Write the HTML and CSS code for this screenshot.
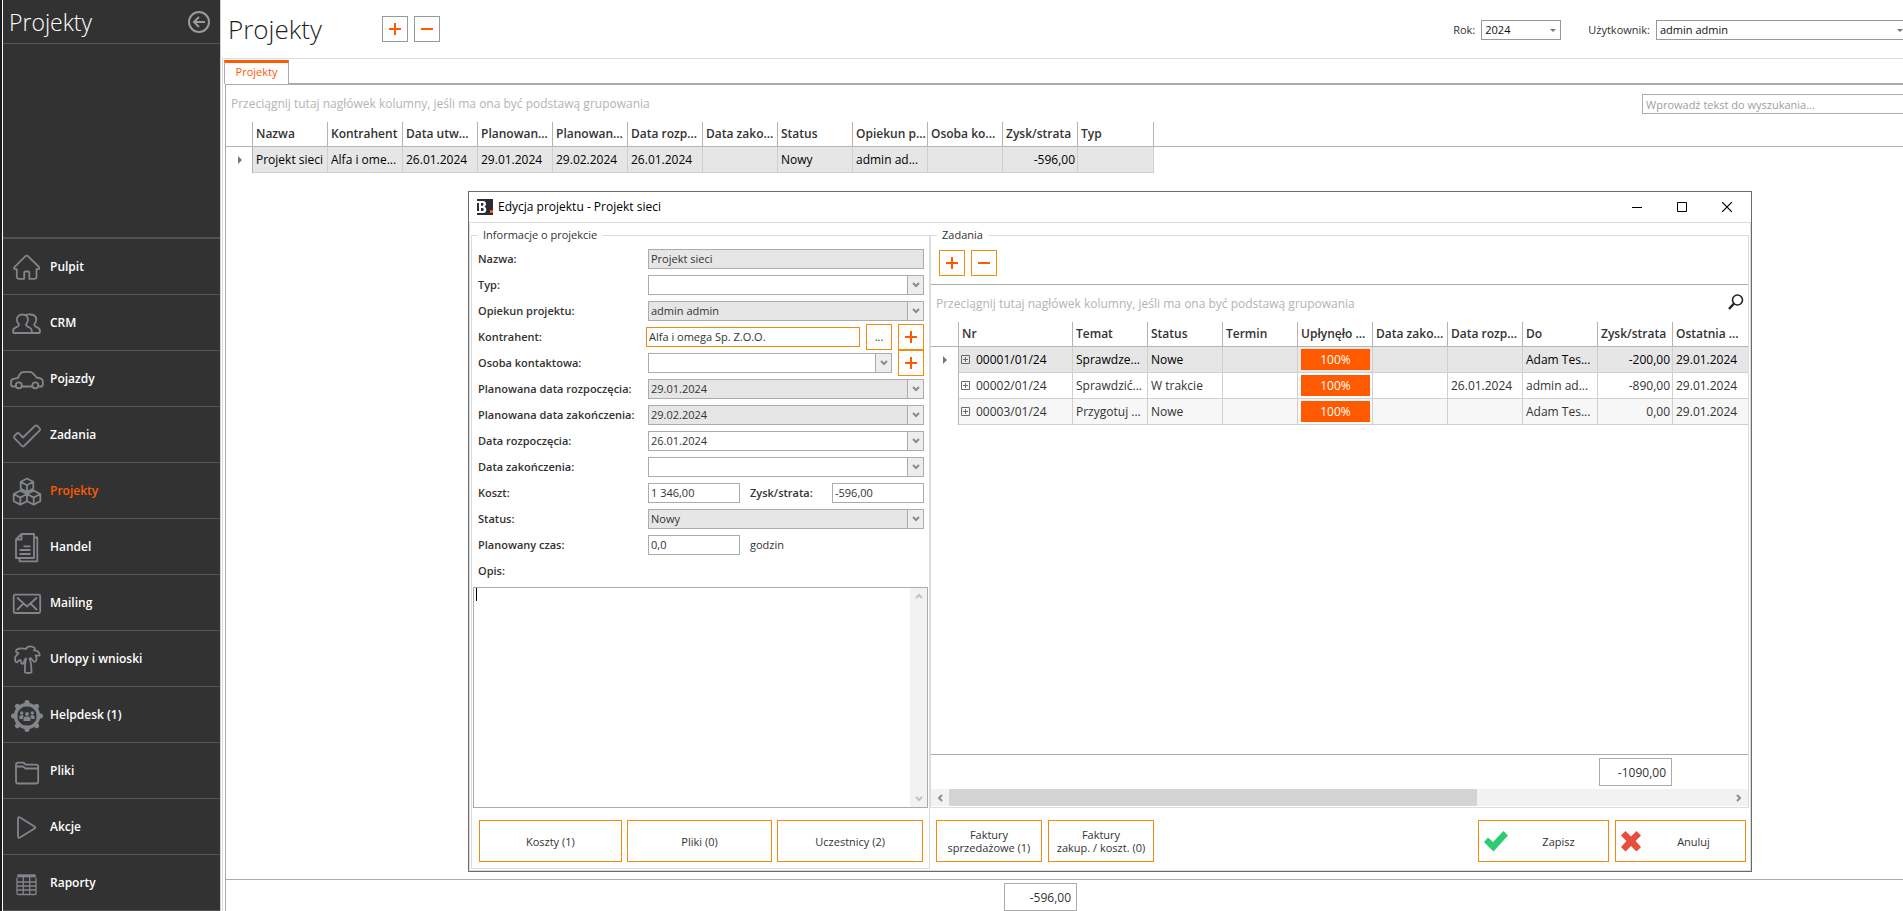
FILE: index.html
```html
<!DOCTYPE html>
<html lang="pl">
<head>
<meta charset="utf-8">
<meta name="viewport" content="width=device-width, initial-scale=1">
<title>Projekty</title>
<link rel="stylesheet" href="styles.css">
</head>
<body>
<svg class="sprite" aria-hidden="true">
  <symbol id="i-plus" viewBox="0 0 12 12"><path d="M0 6H12M6 0V12" stroke="#ff5a00" stroke-width="2"/></symbol>
  <symbol id="i-minus" viewBox="0 0 12 12"><path d="M0 6H12" stroke="#ff5a00" stroke-width="2"/></symbol>
  <symbol id="i-chev" viewBox="0 0 8 6"><path d="M1 1L4 4L7 1" fill="none" stroke="#8c8c8c" stroke-width="2"/></symbol>
  <symbol id="i-expand" viewBox="0 0 9 9"><path d="M.5 .5H8.500V8.500H.5ZM2 4.500H7M4.500 2V7" fill="none" stroke="#6a6a6a"/></symbol>
</svg>
<div class="app">
  <aside class="sidebar">
    <header class="side-head">
      <span class="side-title">Projekty</span>
      <button class="back" aria-label="Wstecz"><svg width="22" height="22" viewBox="0 0 22 22" fill="none" stroke="#9a9a9a" stroke-width="2"><circle cx="11" cy="11" r="10"/><path d="M17 11H6.500M11 6L6 11L11 16"/></svg></button>
    </header>
    <nav class="nav">
      <a href="#"><svg viewBox="0 0 36 36"><path d="M16.500 7.200Q17.700 6 18.900 7.200L30 18Q30.800 20 29.500 20.200H27.500V27.500Q27.500 29.800 25.500 29.800H20.300V23.500Q20.300 22.500 19.300 22.500H16.200Q15.200 22.500 15.200 23.500V29.800H9.800Q7.800 29.800 7.800 27.500V20.200H5.800Q4.500 19.800 5.200 18.300Z"/></svg>Pulpit</a>
      <a href="#"><svg viewBox="0 0 36 36"><path d="M13.300 9.500C9.800 9.500 7.800 12 7.800 14.800C7.800 17.200 9.300 18.500 10 19.500C10.300 21.500 7.500 21.800 5.800 23C4.200 24.200 3.800 26.500 4.600 28H22.500C23.300 25.500 22.300 23.500 20.500 22.500C18.500 21.400 16.500 21.200 17 19.300C17.800 18.300 19 17 19 14.800C19 12 17 9.500 13.300 9.500ZM16.500 10.500C17.800 9.500 19.500 9.300 21.500 9.500C25.200 9.800 27.500 12 27.300 15C27.200 17.500 25.500 18.400 25.200 19.800C25.500 21.500 27.500 21.800 29.300 23C30.900 24.200 31.300 26.500 30.500 28H22.500"/></svg>CRM</a>
      <a href="#"><svg viewBox="0 0 36 36"><path d="M6.500 25.500H3.800Q2 25.500 2 23V21Q2 18.300 4.500 17.800L8.800 17C10 14.500 11 12.500 12.500 11.500C14 10.700 20 10.600 22 11.200C24 12 26 14.500 27.500 16.500C30.500 17 32.500 17.500 33.300 18.700C34.200 20 34.300 25.500 32.500 25.500H30M13 25.500H23"/><circle cx="9.800" cy="24.300" r="3"/><circle cx="26.300" cy="24.300" r="3"/></svg>Pojazdy</a>
      <a href="#"><svg viewBox="0 0 36 36"><path d="M5.200 20.800Q4.600 19.800 5.300 19L8 16.300Q8.900 15.600 9.800 16.300L14 20.500L26.200 8.700Q27.200 8 28.100 8.700L30.800 11.500Q31.500 12.500 30.800 13.400L15 29Q14 29.700 13 29Z"/></svg>Zadania</a>
      <a href="#" class="active"><svg viewBox="0 0 36 36"><path d="M18 5.500L24.300 8.800V15.600L18 19L11.700 15.600V8.800ZM11.700 8.800L18 12.300L24.300 8.800M18 12.300V19M11.300 17.600L18 21V28.300L11.300 31.600L4.700 28.300V21ZM4.700 21L11.300 24.600L18 21M11.300 24.600V31.600M24.700 17.600L31.300 21V28.300L24.700 31.600L18 28.300V21ZM18 21L24.700 24.600L31.300 21M24.700 24.600V31.600"/></svg>Projekty</a>
      <a href="#"><svg viewBox="0 0 36 36"><path d="M12.500 5H25V29H7V10.500ZM12.500 5V10.500H7M25.500 8.500H28.300V32.300H10.500V29.500M14.500 17.300H21.500M10.500 21H21.500M10.500 25H21.500"/></svg>Handel</a>
      <a href="#"><svg viewBox="0 0 36 36"><rect x="4.700" y="9.700" width="26.500" height="18.300" rx="1.500"/><path d="M8 12.500L18 21.500L28 12.500M8 25L14.500 18.500M28 25L21.500 18.500"/></svg>Mailing</a>
      <a href="#"><svg viewBox="0 0 36 36"><path d="M16 31.500V23.500L17 17.500C16 17.500 15.500 19 14.500 22C13.500 24 12 22.500 11.500 19C10 19 9 20 8 21.500C6 21 5.500 18.500 6.500 15.500C7.500 14 9 13 9.500 12C6.500 12 6.500 10 8 8.500C11 6.500 15 7.500 17 8C18 5.500 21 5 24 6C26 6.500 26.500 8 25 9.300C28.500 9.500 30.500 11.500 30.800 14C29 15.500 27.500 14 26.500 14.500C28.500 17 27.500 20 25.500 21C23.500 20 23 18 21.500 17L20.500 17.500C22 21 22.500 26 22.500 31.500Q19 32.500 16 31.500Z"/></svg>Urlopy i wnioski</a>
      <a href="#"><svg viewBox="0 0 36 36"><circle cx="18" cy="19" r="11.500" stroke-width="3.400"/><path stroke-width="5" stroke-linecap="round" d="M18 7V5.500M18 31V32.500M6 19H4.500M30 19H31.500M9.500 10.500L8.300 9.300M26.500 10.500L27.700 9.300M9.500 27.500L8.300 28.700M26.500 27.500L27.700 28.700"/><g fill="#82858b" stroke="none"><circle cx="12.700" cy="16" r="1.700"/><circle cx="18" cy="17" r="1.900"/><circle cx="23.300" cy="16" r="1.700"/><path d="M10.300 22V20Q10.300 18.300 12 18.300H14.500V19.500Q13.700 20.500 13.700 22ZM25.700 22V20Q25.700 18.300 24 18.300H21.500V19.500Q22.300 20.500 22.300 22ZM14.500 24V21.500Q14.500 19.500 16.500 19.500H19.500Q21.500 19.500 21.500 21.500V24Z"/></g></svg>Helpdesk (1)</a>
      <a href="#"><svg viewBox="0 0 36 36"><path d="M7 28.500V11.500Q7 9.700 9 9.700H14.500L17 11.700H27Q29.200 11.700 29.200 13.500V28.500Q29.200 30.500 27 30.500H9Q7 30.500 7 28.500ZM7 13.500H14L16.500 15.500H29"/></svg>Pliki</a>
      <a href="#"><svg viewBox="0 0 36 36"><path d="M9 9.500Q9 7.500 11 8.500L25.500 17.500Q27 18.500 25.500 19.500L11 28.500Q9 29.500 9 27.500Z"/></svg>Akcje</a>
      <a href="#"><svg viewBox="0 0 36 36"><path d="M8 12.500V28.500Q8 29.500 9 29.500H26Q27 29.500 27 28.500V12.500M8 17H27M8 21H27M8 25H27M14.300 12V29.500M20.700 12V29.500" stroke-width="1.300"/><path d="M8.300 10.800H26.700" stroke-width="3"/></svg>Raporty</a>
    </nav>
  </aside>

  <main class="main">
    <header class="top">
      <h1>Projekty</h1>
      <div class="tools">
        <button class="sq grey" aria-label="Dodaj"><svg><use href="#i-plus"/></svg></button>
        <button class="sq grey" aria-label="Usuń"><svg><use href="#i-minus"/></svg></button>
      </div>
      <div class="filters">
        <label for="rok">Rok:</label>
        <span class="drop year"><select id="rok"><option>2024</option></select><i></i></span>
        <label for="user" class="user-label">Użytkownik:</label>
        <span class="drop user"><select id="user"><option>admin admin</option></select><i></i></span>
      </div>
    </header>
    <div class="workspace">
      <div class="tabs"><button class="tab">Projekty</button></div>
      <section class="panel">
        <div class="group-row">
          <span>Przeciągnij tutaj nagłówek kolumny, jeśli ma ona być podstawą grupowania</span>
          <input type="search" class="search" aria-label="Szukaj" placeholder="Wprowadź tekst do wyszukania...">
        </div>
        <table class="grid">
          <colgroup><col class="c-ind"><col class="c"><col class="c"><col class="c"><col class="c"><col class="c"><col class="c"><col class="c"><col class="c"><col class="c"><col class="c"><col class="c"><col class="c-last"><col></colgroup>
          <thead><tr><th></th><th>Nazwa</th><th>Kontrahent</th><th>Data utw...</th><th>Planowan...</th><th>Planowan...</th><th>Data rozp...</th><th>Data zako...</th><th>Status</th><th>Opiekun p...</th><th>Osoba ko...</th><th>Zysk/strata</th><th>Typ</th><th class="rest"></th></tr></thead>
          <tbody><tr class="sel"><td class="ind"><i></i></td><td>Projekt sieci</td><td>Alfa i ome...</td><td>26.01.2024</td><td>29.01.2024</td><td>29.02.2024</td><td>26.01.2024</td><td></td><td>Nowy</td><td>admin ad...</td><td></td><td class="num">-596,00</td><td></td><td class="rest"></td></tr></tbody>
        </table>
        <div class="fill"></div>
        <footer class="sum main-sum"><output>-596,00</output></footer>
      </section>
    </div>
  </main>
</div>

<div class="dialog" role="dialog" aria-labelledby="dlg-title">
  <header class="titlebar">
    <svg class="logo" width="16" height="16" viewBox="0 0 16 16"><path fill="#2b2b35" d="M0 0H16V16H0Z"/><path fill="#fff" d="M0 2H6Q9 2 9 5Q9 7 7.500 7.700Q9.300 8.300 9.300 10.500Q9.300 14 6 14H0V12H2V4H0Z"/><path fill="#2b2b35" d="M4 4H5.500Q6.500 4 6.500 5.300Q6.500 6.700 5.500 6.700H4ZM4 9H5.500Q6.700 9 6.700 10.500Q6.700 12 5.500 12H4Z"/><path fill="#ff5a00" d="M13 11H16V14H13Z"/></svg>
    <span id="dlg-title">Edycja projektu - Projekt sieci</span>
    <div class="win">
      <button aria-label="Minimalizuj"><svg width="10" height="10"><path d="M0 5.500H10" stroke="#000"/></svg></button>
      <button aria-label="Maksymalizuj"><svg width="10" height="10"><path d="M.5 .5H9.500V9.500H.5Z" fill="none" stroke="#000"/></svg></button>
      <button aria-label="Zamknij"><svg width="10" height="10"><path d="M0 0L10 10M10 0L0 10" stroke="#000" stroke-width="1.200"/></svg></button>
    </div>
  </header>
  <div class="dlg-body">
    <fieldset class="info">
      <legend>Informacje o projekcie</legend>
      <div class="form">
        <div class="row"><label for="f1">Nazwa:</label><input id="f1" class="box ro" value="Projekt sieci" readonly></div>
        <div class="row"><label for="f2">Typ:</label><span class="box combo"><select id="f2"><option></option></select><b><svg><use href="#i-chev"/></svg></b></span></div>
        <div class="row"><label for="f3">Opiekun projektu:</label><span class="box combo ro"><select id="f3"><option>admin admin</option></select><b><svg><use href="#i-chev"/></svg></b></span></div>
        <div class="row"><label for="f4">Kontrahent:</label><input id="f4" class="box focus" value="Alfa i omega Sp. Z.O.O."><button class="sq" aria-label="Wybierz">...</button><button class="sq" aria-label="Dodaj kontrahenta"><svg><use href="#i-plus"/></svg></button></div>
        <div class="row"><label for="f5">Osoba kontaktowa:</label><span class="box combo"><select id="f5"><option></option></select><b><svg><use href="#i-chev"/></svg></b></span><button class="sq" aria-label="Dodaj osobę"><svg><use href="#i-plus"/></svg></button></div>
        <div class="row"><label for="f6">Planowana data rozpoczęcia:</label><span class="box combo ro"><input id="f6" value="29.01.2024" readonly><b><svg><use href="#i-chev"/></svg></b></span></div>
        <div class="row"><label for="f7">Planowana data zakończenia:</label><span class="box combo ro"><input id="f7" value="29.02.2024" readonly><b><svg><use href="#i-chev"/></svg></b></span></div>
        <div class="row"><label for="f8">Data rozpoczęcia:</label><span class="box combo"><input id="f8" value="26.01.2024"><b><svg><use href="#i-chev"/></svg></b></span></div>
        <div class="row"><label for="f9">Data zakończenia:</label><span class="box combo"><input id="f9"><b><svg><use href="#i-chev"/></svg></b></span></div>
        <div class="row"><label for="f10">Koszt:</label><input id="f10" class="box short" value="1 346,00"><label for="f11" class="mid">Zysk/strata:</label><input id="f11" class="box short" value="-596,00"></div>
        <div class="row"><label for="f12">Status:</label><span class="box combo ro"><select id="f12"><option>Nowy</option></select><b><svg><use href="#i-chev"/></svg></b></span></div>
        <div class="row"><label for="f13">Planowany czas:</label><input id="f13" class="box short" value="0,0"><span class="unit">godzin</span></div>
        <div class="row"><label for="f14">Opis:</label></div>
      </div>
      <div class="memo"><i class="caret"></i><textarea id="f14"></textarea><div class="vbar"><svg><use href="#i-chev"/></svg><svg><use href="#i-chev"/></svg></div></div>
      <div class="actions"><button class="act">Koszty (1)</button><button class="act">Pliki (0)</button><button class="act">Uczestnicy (2)</button></div>
    </fieldset>
    <div class="right">
      <fieldset class="tasks">
        <legend>Zadania</legend>
        <div class="task-tools">
          <button class="sq" aria-label="Dodaj zadanie"><svg><use href="#i-plus"/></svg></button>
          <button class="sq" aria-label="Usuń zadanie"><svg><use href="#i-minus"/></svg></button>
        </div>
        <div class="group-row">
          <span>Przeciągnij tutaj nagłówek kolumny, jeśli ma ona być podstawą grupowania</span>
          <button class="find" aria-label="Szukaj"><svg width="16" height="16" viewBox="0 0 16 16" fill="none" stroke="#222"><circle cx="9.500" cy="6" r="5" stroke-width="1.600"/><path d="M6 9.500L1 15" stroke-width="2.400"/></svg></button>
        </div>
        <table class="grid">
          <colgroup><col class="c-ind2"><col class="c-nr"><col><col><col><col><col><col><col><col><col></colgroup>
          <thead><tr><th></th><th>Nr</th><th>Temat</th><th>Status</th><th>Termin</th><th>Upłynęło ...</th><th>Data zako...</th><th>Data rozp...</th><th>Do</th><th>Zysk/strata</th><th class="end">Ostatnia ...</th></tr></thead>
          <tbody>
            <tr class="sel"><td class="ind"><i></i></td><td class="nr"><svg class="exp"><use href="#i-expand"/></svg>00001/01/24</td><td>Sprawdze...</td><td>Nowe</td><td></td><td class="prog"><div>100%</div></td><td></td><td></td><td>Adam Tes...</td><td class="num">-200,00</td><td class="end">29.01.2024</td></tr>
            <tr><td class="ind"></td><td class="nr"><svg class="exp"><use href="#i-expand"/></svg>00002/01/24</td><td>Sprawdzić...</td><td>W trakcie</td><td></td><td class="prog"><div>100%</div></td><td></td><td>26.01.2024</td><td>admin ad...</td><td class="num">-890,00</td><td class="end">29.01.2024</td></tr>
            <tr class="alt"><td class="ind"></td><td class="nr"><svg class="exp"><use href="#i-expand"/></svg>00003/01/24</td><td>Przygotuj ...</td><td>Nowe</td><td></td><td class="prog"><div>100%</div></td><td></td><td></td><td>Adam Tes...</td><td class="num">0,00</td><td class="end">29.01.2024</td></tr>
          </tbody>
        </table>
        <div class="fill"></div>
        <footer class="sum task-sum"><output>-1090,00</output></footer>
        <div class="hbar"><span class="arr"><svg><use href="#i-chev"/></svg></span><span class="thumb"></span><span class="track"></span><span class="arr next"><svg><use href="#i-chev"/></svg></span></div>
      </fieldset>
      <div class="actions2">
        <button class="act inv">Faktury sprzedażowe (1)</button>
        <button class="act inv">Faktury<br>zakup. / koszt. (0)</button>
        <div class="fill"></div>
        <button class="act ok"><svg width="26" height="24" viewBox="0 0 26 24"><path fill="#2ecc71" d="M1 13L5 8.500L10 13L20.500 2L25 6.500L10.500 22.500Z"/></svg><span>Zapisz</span></button>
        <button class="act ok"><svg width="22" height="24" viewBox="0 0 22 24"><path fill="#e74c3c" d="M1 6.500L5.500 2L11 7.500L16.500 2L21 6.500L15.500 12L21 18L16.500 22.500L11 17L5.500 22.500L1 18L6.500 12Z"/></svg><span>Anuluj</span></button>
      </div>
    </div>
  </div>
</div>
</body>
</html>
```

FILE: styles.css
```css
:root {
  --accent: #ff5a00;
  --edge: #f28c0f;
  --line: #ababab;
  --soft: #dcdcdc;
  --ink: #333;
  --small: 11px;
  --grid: 12px;
}
* { box-sizing: border-box; }
html, body { height: 100%; }
body {
  margin: 0;
  overflow: hidden;
  background: #fff;
  color: var(--ink);
  font: var(--small)/16px "Open Sans", "Noto Sans", sans-serif;
}
button, input, select, textarea {
  margin: 0;
  padding: 0;
  border: 0;
  background: none;
  color: inherit;
  font: inherit;
  border-radius: 0;
  outline: 0;
}
select { appearance: none; }
svg { display: block; flex: none; }
.sprite { position: absolute; width: 0; height: 0; }
.fill { flex: 1; }

.app { display: flex; min-height: 100vh; border-left: 2px solid #1c1c1c; }

/* sidebar */
.sidebar {
  width: 219px;
  flex: none;
  display: flex;
  flex-direction: column;
  background: #323232;
  border-left: 1px solid #fff;
  border-right: 1px solid #d0d0d0;
}
.side-head {
  display: flex;
  justify-content: space-between;
  align-items: center;
  height: 44px;
  padding: 0 10px 0 6px;
  border-bottom: 1px solid #555;
}
.side-title { color: #fff; font-size: 23px; font-weight: 300; line-height: 32px; }
.nav { margin-top: auto; border-top: 2px solid #505050; }
.nav a {
  display: flex;
  align-items: center;
  gap: 5px;
  height: 56px;
  padding: 1px 0 0 6px;
  border-bottom: 1px solid #555;
  color: #fff;
  font-size: 12px;
  font-weight: 600;
  text-decoration: none;
}
.nav a.active { color: var(--accent); }
.nav svg { width: 36px; height: 36px; fill: none; stroke: #82858b; stroke-width: 1.8; stroke-linejoin: round; }

/* page header */
.main { flex: 1; min-width: 0; margin-right: -8px; display: flex; flex-direction: column; }
.top { display: flex; align-items: center; height: 58px; padding: 0 3px 0 7px; }
h1 { margin: 0; width: 154px; color: #1e1e1e; font-size: 26px; font-weight: 300; line-height: 36px; }
.tools { display: flex; gap: 6px; }
.filters { margin-left: auto; padding-top: 2px; display: flex; align-items: center; gap: 6px; }
.user-label { margin-left: 21px; }
.drop { display: flex; align-items: center; height: 20px; border: 1px solid #999; background: #fff; color: #111; }
.drop select { flex: 1; padding-left: 3px; height: 18px; }
.drop i { width: 0; border: 3px solid transparent; border-top-color: #777; border-bottom: 0; margin-right: 4px; }
.year { width: 80px; }
.user { width: 252px; }
.sq {
  display: flex;
  align-items: center;
  justify-content: center;
  width: 26px;
  height: 26px;
  flex: none;
  border: 1px solid var(--edge);
  background: #fff;
}
.sq svg { width: 12px; height: 12px; }
.sq.grey { border-color: #999; }

/* tabs and panel */
.workspace {
  flex: 1;
  display: flex;
  flex-direction: column;
  margin-left: 1px;
  padding: 1px 0 0 1px;
  border-left: 1px solid var(--soft);
  border-top: 1px solid var(--soft);
}
.tabs { display: flex; border-bottom: 1px solid var(--line); }
.tab {
  width: 65px;
  height: 24px;
  margin-bottom: -1px;
  padding-bottom: 3px;
  border: 1px solid var(--line);
  border-top: 3px solid var(--accent);
  border-bottom: 0;
  background: #fff;
  color: var(--accent);
}
.panel { flex: 1; display: flex; flex-direction: column; margin-left: 1px; border: 1px solid var(--line); border-width: 1px 0 0 1px; }
.group-row {
  display: flex;
  align-items: center;
  justify-content: space-between;
  height: 37px;
  padding: 1px 4px 0 5px;
  color: #b4b4b4;
  font-size: var(--grid);
}
.search { width: 265px; height: 20px; padding: 0 3px; border: 1px solid var(--line); font-size: var(--small); appearance: none; }
.search::placeholder { color: #a0a0a0; opacity: 1; }

/* data grids */
.grid { width: 100%; table-layout: fixed; border-spacing: 0; font-size: var(--grid); }
.c-ind { width: 27px; }
.c-ind2 { width: 28px; }
.c { width: 75px; }
.c-last { width: 76px; }
.c-nr { width: 114px; }
.grid th, .grid td { padding: 0 2px 0 3px; overflow: hidden; white-space: nowrap; text-align: left; }
.grid th { height: 25px; border-right: 1px solid #b4b4b4; border-bottom: 1px solid #b4b4b4; font-weight: 600; }
.grid td { height: 26px; border-right: 1px solid #d0d0d0; border-bottom: 1px solid #d0d0d0; }
.grid .ind { border-right-color: #b4b4b4; border-bottom: 0; background: #fff; }
.ind i { display: block; width: 0; margin-left: 9px; border: 4px solid transparent; border-left-color: #777; border-right: 0; }
.grid .rest { border-right: 0; }
.grid td.rest { border-bottom: 0; background: #fff; }
.grid .end { border-right: 0; }
.grid .num { text-align: right; }
.grid .nr { padding-left: 2px; }
.sel { background: #e6e6e6; color: #000; }
.alt { background: #f7f7f7; }
.exp { display: inline-block; width: 9px; height: 9px; margin-right: 6px; }
.prog div { height: 21px; background: var(--accent); color: #fff; line-height: 21px; text-align: center; }

.sum { border-top: 1px solid var(--line); padding-top: 3px; display: flex; }
.sum output {
  width: 73px;
  height: 28px;
  padding-right: 5px;
  border: 1px solid var(--line);
  font-size: var(--grid);
  line-height: 27px;
  text-align: right;
}
.main-sum { height: 32px; padding-left: 778px; }
.task-sum { height: 35px; padding-right: 76px; justify-content: flex-end; }

/* dialog window */
.dialog {
  position: absolute;
  left: 468px;
  right: 151px;
  top: 191px;
  bottom: 39px;
  display: flex;
  flex-direction: column;
  border: 1px solid #6b6b6b;
  background: #fff;
}
.titlebar { display: flex; align-items: center; gap: 5px; height: 30px; padding: 0 2px 0 8px; color: #000; font-size: 12px; }
.win { margin-left: auto; display: flex; }
.win button { width: 45px; height: 28px; display: flex; align-items: center; justify-content: center; }
.dlg-body { flex: 1; min-height: 0; display: flex; padding: 2px 1px 1px; border: 1px solid var(--soft); }
fieldset { margin: 0; padding: 0; min-width: 0; border: 1px solid var(--soft); display: flex; flex-direction: column; }
legend { margin-left: 6px; padding: 0 5px; line-height: 20px; }
.info { width: 459px; flex: none; }
.form { padding: 1px 5px 3px 6px; }
.row { display: flex; align-items: center; gap: 6px; height: 26px; }
.row > label { width: 164px; flex: none; font-weight: 600; white-space: nowrap; }
.row > label.mid { width: auto; margin-left: 4px; margin-right: auto; }
.unit { margin-left: 4px; }
.box { flex: 1; min-width: 0; height: 20px; padding: 0 0 1px 2px; border: 1px solid var(--line); background: #fff; }
.box.ro { background: #e6e6e6; }
.box.short { flex: none; width: 92px; }
.box.focus { margin-left: -2px; border-color: var(--edge); }
.box.combo { display: flex; padding-bottom: 0; }
.combo select, .combo input { flex: 1; min-width: 0; }
.combo b { width: 16px; display: flex; align-items: center; justify-content: center; border-left: 1px solid var(--line); background: #ededed; }
.combo svg, .vbar svg, .arr svg { width: 8px; height: 6px; }
.memo { position: relative; flex: 1; display: flex; margin: 0 1px; border: 1px solid var(--line); }
.memo textarea { flex: 1; resize: none; padding: 1px 3px; }
.caret { position: absolute; left: 2px; top: 0; width: 1px; height: 13px; background: #000; }
.vbar { width: 17px; display: flex; flex-direction: column; justify-content: space-between; align-items: center; padding: 5px 0; background: #f2f2f2; }
.vbar svg { opacity: .45; }
.vbar svg:first-child { transform: rotate(180deg); }
.actions { display: grid; grid-template-columns: 143fr 146fr 146fr; gap: 5px; padding: 12px 6px 6px 7px; }
.act {
  flex: 1;
  height: 42px;
  border: 1px solid var(--edge);
  background: #fff;
  line-height: 13px;
}
.right { flex: 1; min-width: 0; display: flex; flex-direction: column; }
.tasks { flex: 1; padding-bottom: 1px; }
.task-tools { display: flex; gap: 6px; height: 40px; padding: 5px 8px; border-bottom: 1px solid var(--line); }
.find { margin-bottom: 4px; }
.hbar { display: flex; height: 17px; background: #f2f2f2; }
.arr { width: 18px; display: flex; align-items: center; justify-content: center; }
.arr svg { transform: rotate(90deg); }
.arr.next svg { transform: rotate(-90deg); }
.thumb { flex: 528; background: #d4d4d4; }
.track { flex: 253; }
.actions2 { display: flex; gap: 6px; height: 61px; padding: 12px 3px 0 6px; }
.act.inv { flex: none; width: 106px; }
.act.ok { flex: none; width: 131px; display: flex; align-items: center; padding-left: 4px; }
.act.ok span { flex: 1; text-align: center; }
```
